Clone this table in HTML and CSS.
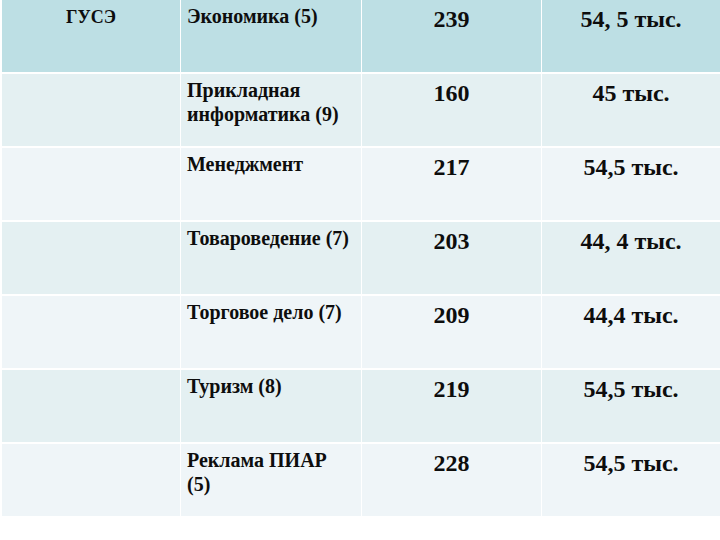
FILE: index.html
```html
<!DOCTYPE html>
<html lang="ru">
<head>
<meta charset="utf-8">
<title>Таблица</title>
<link rel="stylesheet" href="styles.css">
</head>
<body>
<div class="grid">
  <div class="cell head c1">ГУСЭ</div>
  <div class="cell head c2">Экономика (5)</div>
  <div class="cell head num">239</div>
  <div class="cell head num">54, 5 тыс.</div>

  <div class="cell odd c1"></div>
  <div class="cell odd c2">Прикладная информатика (9)</div>
  <div class="cell odd num">160</div>
  <div class="cell odd num">45 тыс.</div>

  <div class="cell even c1"></div>
  <div class="cell even c2">Менеджмент</div>
  <div class="cell even num">217</div>
  <div class="cell even num">54,5 тыс.</div>

  <div class="cell odd c1"></div>
  <div class="cell odd c2">Товароведение (7)</div>
  <div class="cell odd num">203</div>
  <div class="cell odd num">44, 4 тыс.</div>

  <div class="cell even c1"></div>
  <div class="cell even c2">Торговое дело (7)</div>
  <div class="cell even num">209</div>
  <div class="cell even num">44,4 тыс.</div>

  <div class="cell odd c1"></div>
  <div class="cell odd c2">Туризм (8)</div>
  <div class="cell odd num">219</div>
  <div class="cell odd num">54,5 тыс.</div>

  <div class="cell even c1"></div>
  <div class="cell even c2">Реклама ПИАР (5)</div>
  <div class="cell even num">228</div>
  <div class="cell even num">54,5 тыс.</div>
</div>
</body>
</html>
```

FILE: styles.css
```css
html, body {
  margin: 0;
  padding: 0;
  background: #ffffff;
}
body {
  width: 720px;
  height: 540px;
  overflow: hidden;
  font-family: "Liberation Serif", "Times New Roman", serif;
  font-weight: bold;
  color: #0d0d0d;
}
.grid {
  display: grid;
  margin-left: 2px;
  width: 718px;
  grid-template-columns: 178px 180px 179px 178px;
  grid-template-rows: repeat(7, 72px);
  column-gap: 1px;
  row-gap: 2px;
}
.cell {
  box-sizing: border-box;
  font-size: 20px;
  line-height: 24px;
  padding-top: 4px;
}
.head { background: #bddfe4; }
.odd { background: #e4f0f2; }
.even { background: #eff5f8; }
.c1 {
  font-size: 18px;
  text-align: center;
  padding-top: 5px;
}
.c2 {
  padding-left: 6px;
  padding-right: 10px;
}
.num {
  font-size: 24px;
  line-height: 28px;
  text-align: center;
  padding-top: 5px;
}
```
